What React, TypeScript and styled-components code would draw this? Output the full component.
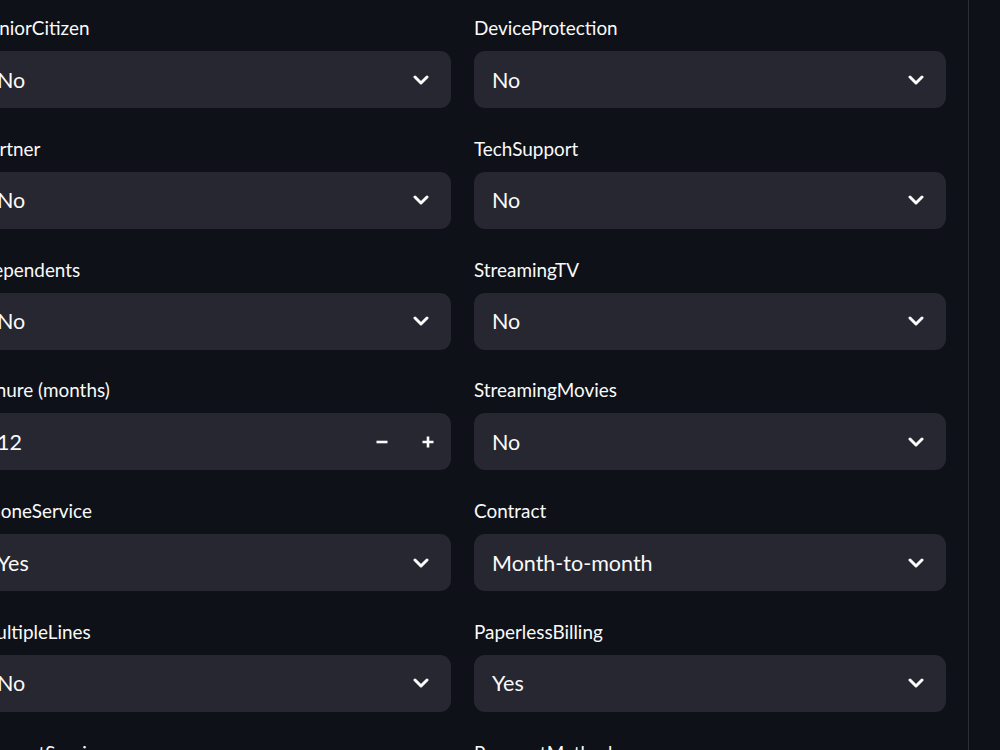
import React from 'react';
import styled, { createGlobalStyle } from 'styled-components';

const GlobalStyle = createGlobalStyle`
	html, body {
		margin: 0;
		padding: 0;
		background: #0e1117;
		overflow: hidden;
	}
	body {
		font-family: Lato, "Liberation Sans", sans-serif;
		color: #fafafa;
	}
`;

const Page = styled.div`
	display: flex;
	width: 1000px;
	height: 750px;
	background: #0e1117;
	overflow: hidden;
`;

const Main = styled.main`
	width: 968px;
	overflow: hidden;
`;

const SidePanel = styled.aside`
	flex: 1;
	border-left: 1px solid #2d2f37;
	background: #0e1117;
`;

const FormGrid = styled.div`
	display: grid;
	grid-template-columns: 472px 472px;
	column-gap: 23px;
	margin-left: -21px;
	padding-top: 11px;
`;

const Column = styled.div`
	display: flex;
	flex-direction: column;
	gap: 23.8px;
`;

const Field = styled.div`
	display: flex;
	flex-direction: column;
`;

const Label = styled.label`
	height: 34px;
	line-height: 34px;
	font-size: 18.9px;
	color: #fafafa;
	margin-bottom: 6px;
	white-space: nowrap;
`;

const Box = styled.div`
	display: flex;
	align-items: center;
	height: 57px;
	background: #262730;
	border-radius: 11px;
	padding-left: 18px;
	box-sizing: border-box;
`;

const Value = styled.span`
	flex: 1;
	font-size: 21.5px;
	color: #fafafa;
`;

const Caret = styled.span`
	display: flex;
	width: 60px;
	justify-content: center;
`;

const StepButton = styled.button`
	width: 46px;
	height: 57px;
	display: flex;
	align-items: center;
	justify-content: center;
	background: transparent;
	border: none;
	padding: 0;
	cursor: pointer;
`;

const Chevron = () => (
	<svg width="16" height="10" viewBox="0 0 16 10">
		<path d="M2 2 L8 8 L14 2" fill="none" stroke="#fafafa" strokeWidth="3" strokeLinecap="round" strokeLinejoin="round" />
	</svg>
);

const Minus = () => (
	<svg width="14" height="14" viewBox="0 0 14 14">
		<path d="M1.5 7 H12.5" stroke="#fafafa" strokeWidth="2.6" />
	</svg>
);

const Plus = () => (
	<svg width="14" height="14" viewBox="0 0 14 14">
		<path d="M1.5 7 H12.5 M7 1.5 V12.5" stroke="#fafafa" strokeWidth="2.6" />
	</svg>
);

type FieldDef = { label: string; value: string; kind?: 'number' };

const left: FieldDef[] = [
	{ label: 'SeniorCitizen', value: 'No' },
	{ label: 'Partner', value: 'No' },
	{ label: 'Dependents', value: 'No' },
	{ label: 'tenure (months)', value: '12', kind: 'number' },
	{ label: 'PhoneService', value: 'Yes' },
	{ label: 'MultipleLines', value: 'No' },
	{ label: 'InternetService', value: 'DSL' },
];

const right: FieldDef[] = [
	{ label: 'DeviceProtection', value: 'No' },
	{ label: 'TechSupport', value: 'No' },
	{ label: 'StreamingTV', value: 'No' },
	{ label: 'StreamingMovies', value: 'No' },
	{ label: 'Contract', value: 'Month-to-month' },
	{ label: 'PaperlessBilling', value: 'Yes' },
	{ label: 'PaymentMethod', value: 'Electronic check' },
];

const FormField = ({ f }: { f: FieldDef }) => (
	<Field>
		<Label>{f.label}</Label>
		{f.kind === 'number' ? (
			<Box>
				<Value>{f.value}</Value>
				<StepButton aria-label="decrement">
					<Minus />
				</StepButton>
				<StepButton aria-label="increment">
					<Plus />
				</StepButton>
			</Box>
		) : (
			<Box>
				<Value>{f.value}</Value>
				<Caret>
					<Chevron />
				</Caret>
			</Box>
		)}
	</Field>
);

const App = () => {
	return (
		<Page>
			<GlobalStyle />
			<Main>
				<FormGrid>
					<Column>
						{left.map((f) => (
							<FormField key={f.label} f={f} />
						))}
					</Column>
					<Column>
						{right.map((f) => (
							<FormField key={f.label} f={f} />
						))}
					</Column>
				</FormGrid>
			</Main>
			<SidePanel />
		</Page>
	);
};

export default App;
